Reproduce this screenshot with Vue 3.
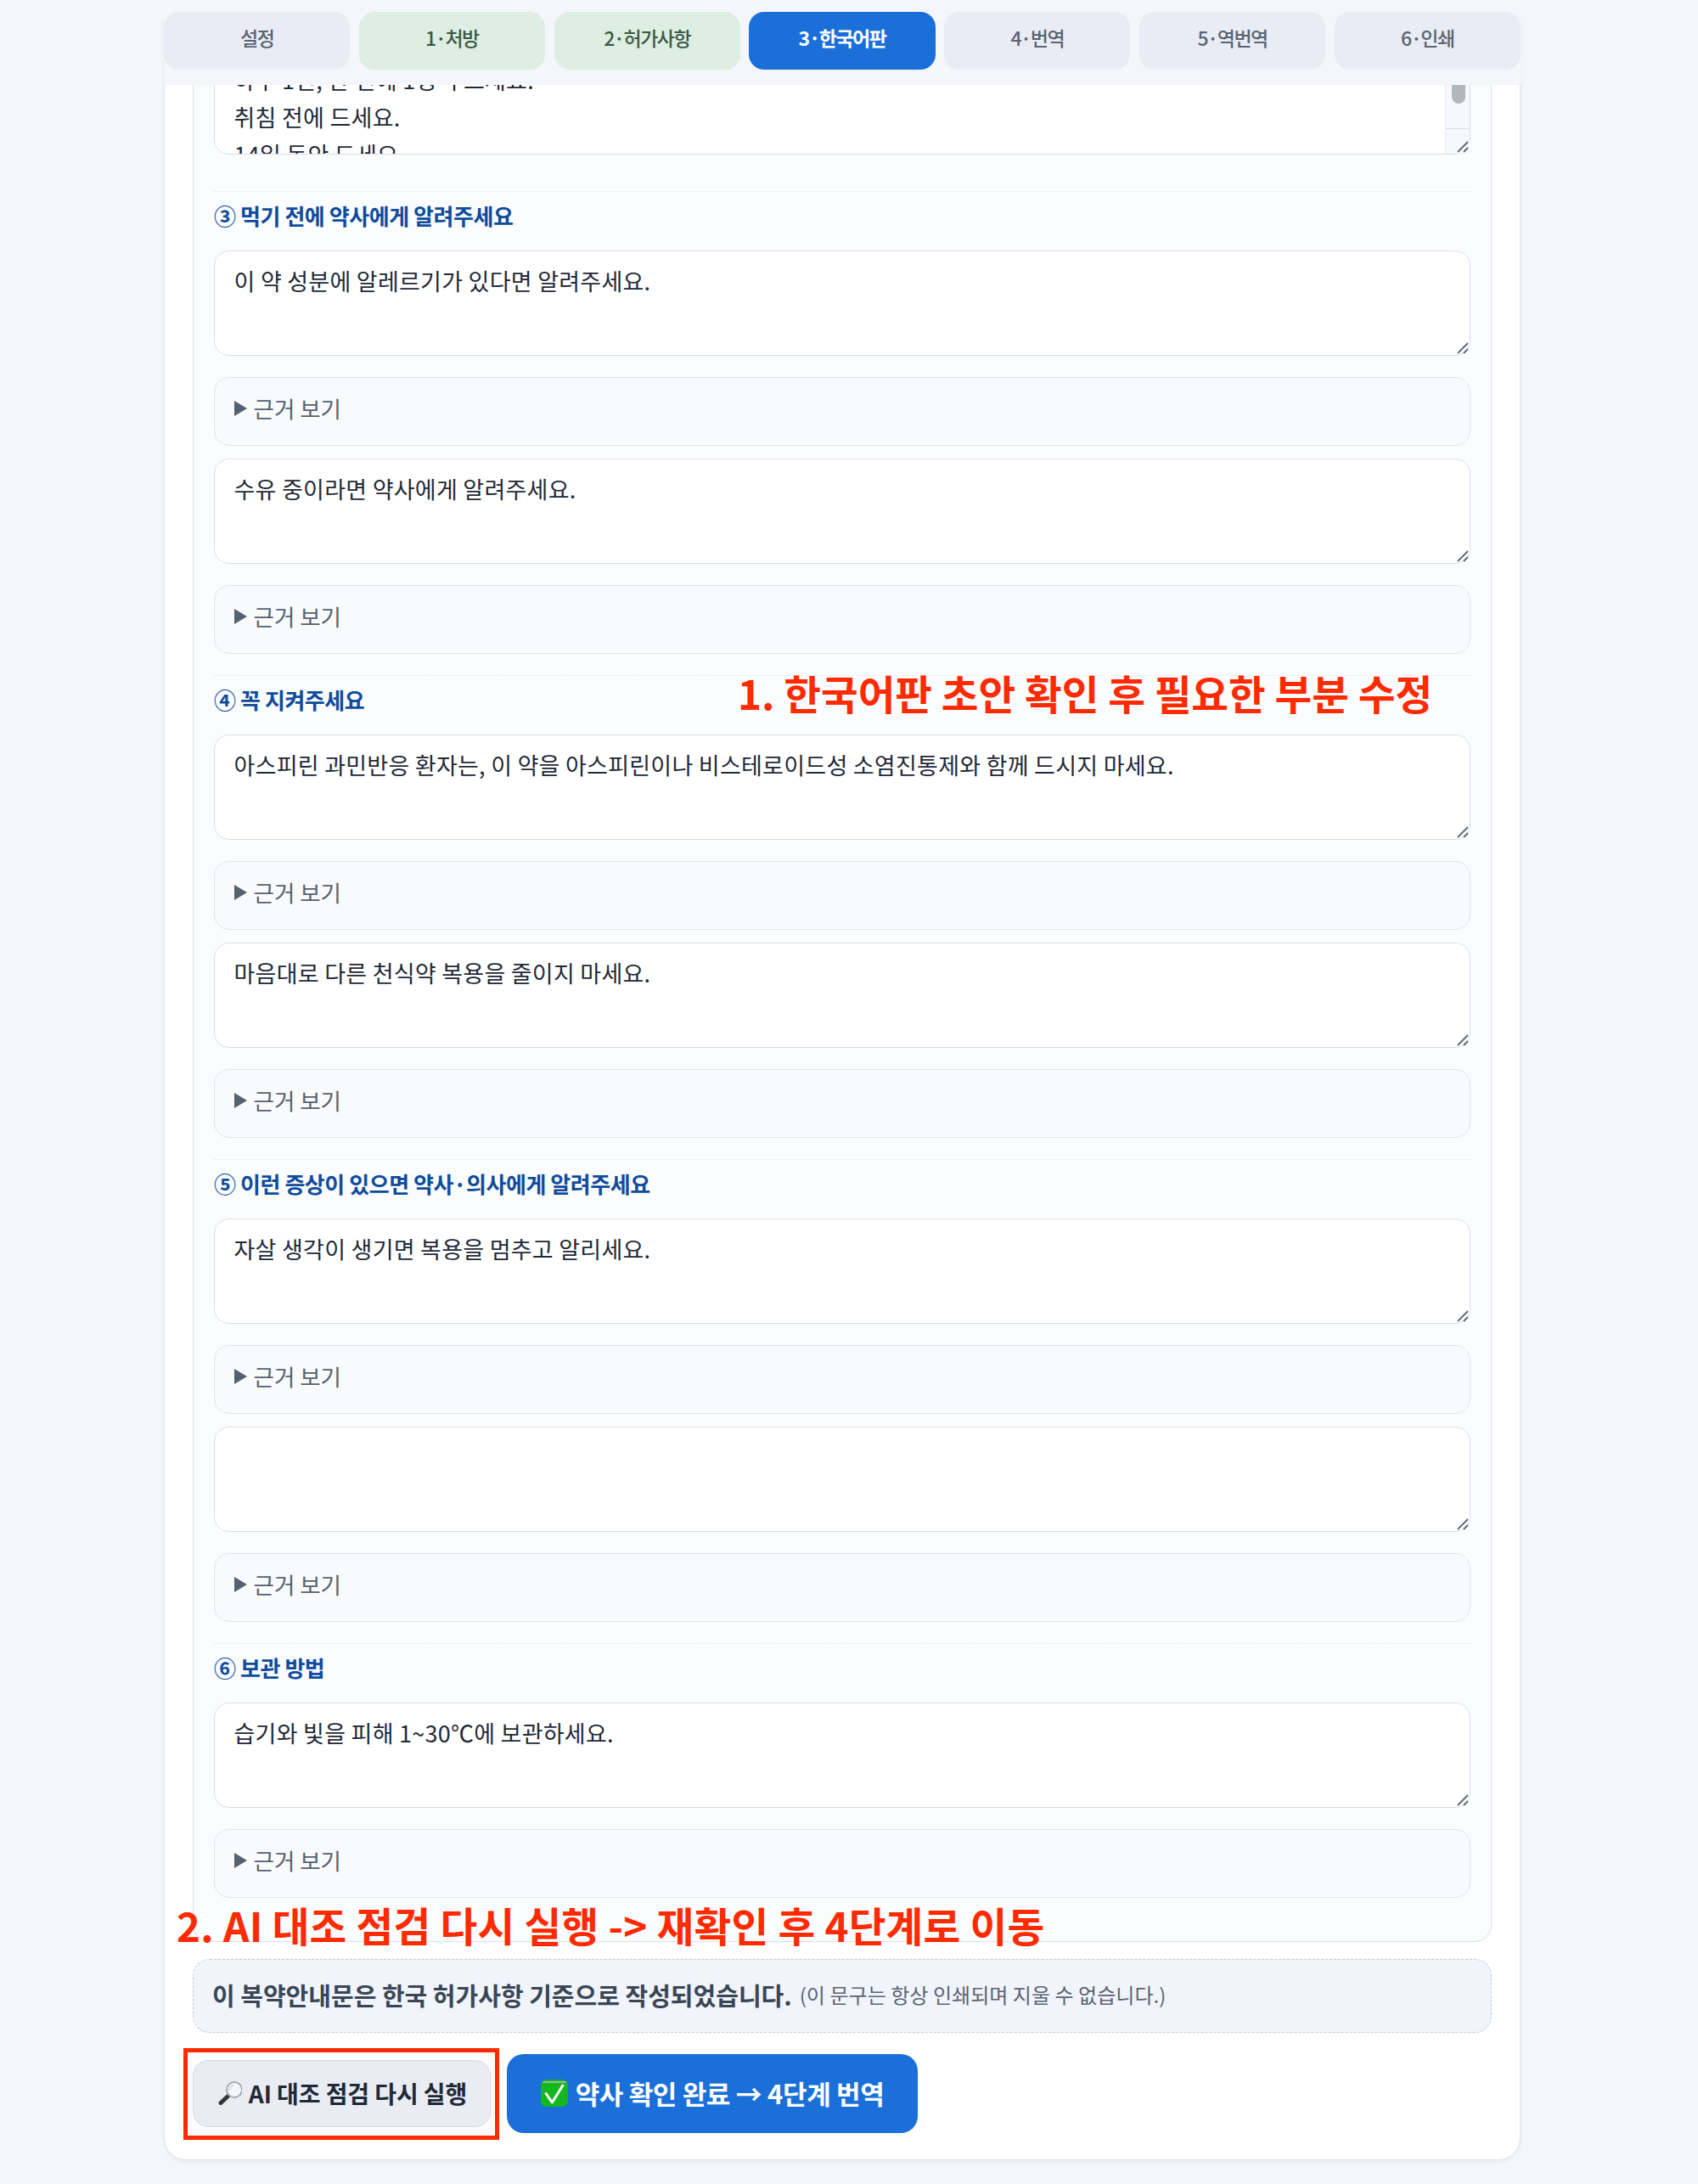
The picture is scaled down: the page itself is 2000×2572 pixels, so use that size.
<script setup>
const tabs = [
  { label: '설정', state: 'idle' },
  { label: '1·처방', state: 'done' },
  { label: '2·허가사항', state: 'done' },
  { label: '3·한국어판', state: 'active' },
  { label: '4·번역', state: 'idle' },
  { label: '5·역번역', state: 'idle' },
  { label: '6·인쇄', state: 'idle' },
]
const sections = [
  { title: '③ 먹기 전에 약사에게 알려주세요', items: ['이 약 성분에 알레르기가 있다면 알려주세요.', '수유 중이라면 약사에게 알려주세요.'] },
  { title: '④ 꼭 지켜주세요', items: ['아스피린 과민반응 환자는, 이 약을 아스피린이나 비스테로이드성 소염진통제와 함께 드시지 마세요.', '마음대로 다른 천식약 복용을 줄이지 마세요.'] },
  { title: '⑤ 이런 증상이 있으면 약사·의사에게 알려주세요', items: ['자살 생각이 생기면 복용을 멈추고 알리세요.', ''] },
  { title: '⑥ 보관 방법', items: ['습기와 빛을 피해 1~30℃에 보관하세요.'] },
]
</script>

<template>
  <div class="page">
    <nav class="tabs">
      <button v-for="t in tabs" :key="t.label" class="tab" :class="t.state">{{ t.label }}</button>
    </nav>
    <main class="card">
      <section class="panel">
        <div class="field">
          <textarea class="ta" readonly>하루 1번, 한 번에 1정씩 드세요.
취침 전에 드세요.
14일 동안 드세요.</textarea>
          <div class="scroll"><i class="thumb"></i></div>
          <svg class="grip" viewBox="0 0 14 14" width="14" height="14"><path d="M1 13 L13 1 M8 13 L13 8" stroke="#5f6672" stroke-width="1.8" /></svg>
        </div>
        <div v-for="s in sections" :key="s.title" class="block">
          <h3 class="heading">{{ s.title }}</h3>
          <div v-for="(it, i) in s.items" :key="i" class="item">
            <div class="field">
              <textarea class="ta" readonly>{{ it }}</textarea>
              <svg class="grip" viewBox="0 0 14 14" width="14" height="14"><path d="M1 13 L13 1 M8 13 L13 8" stroke="#5f6672" stroke-width="1.8" /></svg>
            </div>
            <details class="basis"><summary>근거 보기</summary></details>
          </div>
        </div>
      </section>
      <p class="note">
        <strong>이 복약안내문은 한국 허가사항 기준으로 작성되었습니다.</strong>
        <small>(이 문구는 항상 인쇄되며 지울 수 없습니다.)</small>
      </p>
      <div class="actions">
        <button class="btn secondary">
          <svg class="ico" viewBox="0 0 30 30" width="30" height="30">
            <path d="M13 19 L5 26.5" stroke="#34363c" stroke-width="5" stroke-linecap="round" />
            <circle cx="21" cy="11" r="9" fill="#f3f7fa" stroke="#a4abb2" stroke-width="2" />
            <path d="M15.5 12 A6 6 0 0 1 20 5.5" fill="none" stroke="#d3dce3" stroke-width="2" />
          </svg>
          AI 대조 점검 다시 실행
        </button>
        <button class="btn primary">
          <svg class="ico" viewBox="0 0 32 32" width="32" height="32">
            <rect x="0" y="0" width="32" height="32" rx="7" fill="#14b81e" />
            <path d="M3 3 H29" stroke="#9fb5a3" stroke-width="2" stroke-linecap="round" />
            <path d="M5.5 15.5 L13.3 27 L26.5 6" fill="none" stroke="#fff" stroke-width="3" stroke-linejoin="round" />
          </svg>
          약사 확인 완료 → 4단계 번역
        </button>
      </div>
    </main>
    <div class="mark note1">1. 한국어판 초안 확인 후 필요한 부분 수정</div>
    <div class="mark note2">2. AI 대조 점검 다시 실행 -&gt; 재확인 후 4단계로 이동</div>
    <div class="redbox"></div>
  </div>
</template>

<style>
html, body { margin: 0; background: #f4f6fb; }
</style>

<style scoped>
.page {
  position: relative;
  width: 2000px;
  height: 2572px;
  overflow: hidden;
  box-sizing: border-box;
  padding: 0 209px 0 193px;
  background: #f4f6fb;
  font-family: "Noto Sans CJK KR", "Noto Sans", sans-serif;
  color: #1f2937;
}
.tabs {
  position: relative;
  z-index: 2;
  display: grid;
  grid-template-columns: repeat(7, 1fr);
  gap: 10.5px;
  height: 100px;
  box-sizing: border-box;
  padding-top: 14px;
  padding-bottom: 18px;
  background: #f4f6fb;
}
.tab {
  border: 0;
  border-radius: 18px;
  padding: 0 0 8px;
  font: 500 23px "Noto Sans CJK KR", sans-serif;
  letter-spacing: -1.5px;
}
.tab.idle { background: #e9ecf4; color: #5a6472; }
.tab.done { background: #deeee2; color: #3a5a47; }
.tab.active { background: #1a6fd8; color: #fff; font-weight: 700; }
.card {
  box-sizing: border-box;
  height: 2544px;
  margin-top: -100px;
  padding: 57px 33px 0;
  border: 1px solid #dfe3ea;
  border-radius: 26px;
  background: #fff;
  box-shadow: 0 2px 5px rgba(30, 45, 80, .06);
}
.panel {
  box-sizing: border-box;
  height: 2229px;
  padding: 0 24px;
  border: 1px solid #dde2ea;
  border-top: 0;
  border-radius: 0 0 20px 20px;
  background: #fbfcfe;
}
.field { position: relative; }
.ta {
  display: block;
  box-sizing: border-box;
  width: 100%;
  height: 124px;
  padding: 13px 22.5px;
  border: 1.5px solid #d8dee8;
  border-radius: 18px;
  outline: 0;
  background: #fff;
  resize: none;
  overflow: hidden;
  font: 400 27px/44px "Noto Sans CJK KR", sans-serif;
  letter-spacing: .25px;
  color: #1f2937;
}
.grip {
  position: absolute;
  right: 2px;
  bottom: 2px;
}
.scroll {
  position: absolute;
  top: 1px;
  right: 1px;
  bottom: 1px;
  width: 29px;
  box-sizing: border-box;
  border-left: 1px solid #e6e9ef;
  background: linear-gradient(#f7f8fb 0 92px, #d8dde6 92px 93px, #f7f8fb 93px);
}
.thumb {
  position: absolute;
  top: 0;
  left: 7px;
  width: 16px;
  height: 63px;
  border-radius: 8px;
  background: #b2b6bd;
}
.heading {
  box-sizing: border-box;
  height: 70px;
  margin: 25px 0 0;
  padding-top: 10.5px;
  border-top: 1.5px dashed #e8ebf0;
  font-size: 26px;
  line-height: 34px;
  font-weight: 700;
  letter-spacing: -.45px;
  color: #0f4c9c;
}
.field + .block .heading { margin-top: 43px; }
.item + .item { margin-top: 15px; }
.basis {
  box-sizing: border-box;
  height: 81px;
  margin-top: 25px;
  padding: 16px 22.5px;
  border: 1.5px solid #dfe3ea;
  border-radius: 18px;
  background: #f9fafc;
  font-size: 26.5px;
  line-height: 40px;
  letter-spacing: 0;
  color: #566170;
}
.basis summary {
  display: flex;
  align-items: center;
  gap: 8px;
  list-style: none;
  cursor: pointer;
}
.basis summary::-webkit-details-marker { display: none; }
.basis summary::before {
  content: "";
  width: 0;
  height: 0;
  border-left: 15px solid #566170;
  border-top: 9px solid transparent;
  border-bottom: 9px solid transparent;
}
.note {
  display: flex;
  align-items: center;
  gap: 9px;
  box-sizing: border-box;
  height: 87px;
  margin: 20px 0 0;
  padding: 0 22px 4px;
  border: 1.5px dashed #c5cad6;
  border-radius: 20px;
  background: #f1f4fb;
}
.note strong { font-size: 29px; font-weight: 700; letter-spacing: 0; color: #3a4656; }
.note small { font-size: 24px; letter-spacing: .05px; color: #5a6472; }
.actions {
  display: flex;
  align-items: center;
  gap: 19px;
  margin-top: 25px;
}
.btn {
  display: inline-flex;
  align-items: center;
  justify-content: center;
  gap: 8px;
  box-sizing: border-box;
  padding: 0 0 2px;
  font-family: "Noto Sans CJK KR", sans-serif;
}
.secondary {
  width: 351px;
  height: 79px;
  border: 1.5px solid #d5dae4;
  border-radius: 18px;
  background: #e9ecf3;
  font-size: 28px;
  font-weight: 600;
  letter-spacing: -.1px;
  color: #1f2937;
}
.primary {
  width: 484px;
  height: 93px;
  gap: 9px;
  border: 0;
  border-radius: 20px;
  background: #1a6fd8;
  font-size: 31px;
  font-weight: 700;
  letter-spacing: -.35px;
  color: #fff;
}
.ico { flex: none; }
.mark {
  position: absolute;
  z-index: 3;
  font-size: 47.5px;
  line-height: 60px;
  font-weight: 700;
  white-space: nowrap;
  color: #ff2a00;
}
.note1 { left: 869px; top: 786px; }
.note2 { left: 208px; top: 2237px; letter-spacing: .25px; }
.redbox {
  position: absolute;
  z-index: 3;
  left: 216px;
  top: 2412px;
  width: 372px;
  height: 108px;
  box-sizing: border-box;
  border: 5px solid #ff2a00;
}
</style>
